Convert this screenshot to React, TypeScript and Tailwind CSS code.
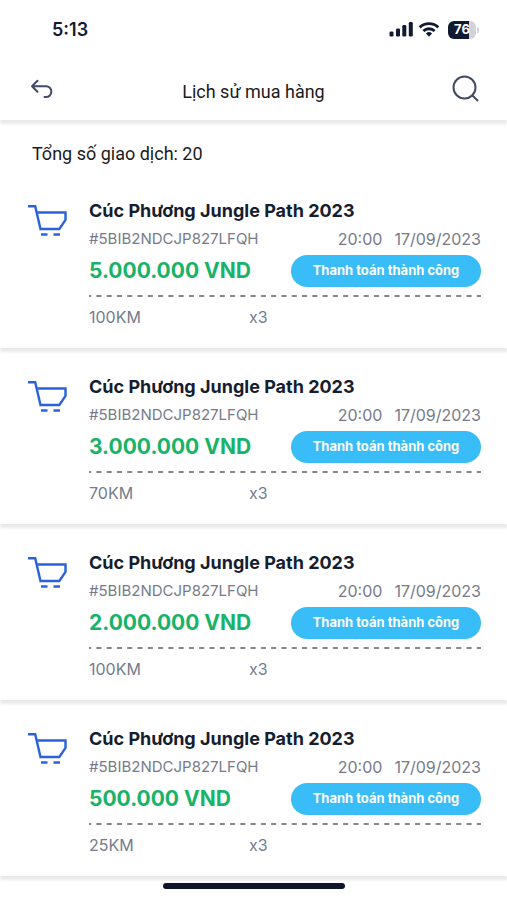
type Order = { id: number; amount: string; distance: string };

const orders: Order[] = [
  { id: 1, amount: "5.000.000 VND", distance: "100KM" },
  { id: 2, amount: "3.000.000 VND", distance: "70KM" },
  { id: 3, amount: "2.000.000 VND", distance: "100KM" },
  { id: 4, amount: "500.000 VND", distance: "25KM" },
];

function StatusBar() {
  return (
    <div className="flex h-14 items-center justify-between pl-13 pr-7 pt-1 text-[#111a30]">
      <time className="text-lg font-semibold">5:13</time>
      <div className="flex items-center gap-1">
        <svg width="25" height="19" viewBox="0 0 25 19" fill="currentColor" aria-hidden="true">
          <rect x="0.500" y="10.500" width="4" height="5" rx="1.300" />
          <rect x="7" y="7.500" width="4" height="8" rx="1.300" />
          <rect x="13.300" y="4" width="4" height="11.500" rx="1.300" />
          <rect x="19.800" y="1" width="4" height="14.500" rx="1.300" />
        </svg>
        <svg width="22" height="19" viewBox="0 0 23 19" fill="none" stroke="currentColor" strokeWidth="3" aria-hidden="true">
          <path d="M1.800 6.200a14 14 0 0 1 19.400 0" />
          <path d="M5.600 10a8.600 8.600 0 0 1 11.800 0" />
          <path d="M8.300 12.700a4.600 4.600 0 0 1 6.400 0L11.500 16z" fill="currentColor" stroke="none" />
        </svg>
        <div className="ml-1 flex items-center gap-px">
          <div className="flex h-[18px] w-7 items-center justify-center rounded-md bg-linear-to-r from-[#111a30] from-75% to-[#d0d3db] to-75% text-[13px] font-bold text-white">
            76
          </div>
          <div className="h-1.5 w-0.5 rounded-r-full bg-[#d0d3db]" />
        </div>
      </div>
    </div>
  );
}

function CartIcon() {
  return (
    <svg className="mt-1 shrink-0" width="40" height="34" viewBox="0 0 40 34" fill="none" stroke="#2a62dc" strokeWidth="2.400" aria-hidden="true">
      <path d="M0 3.200h7.200L12.500 26h18.800l6.200-9V9.500H8.700" />
      <path d="M13 31.500h6.500M25.500 31.500h6.500" />
    </svg>
  );
}

function OrderCard({ order }: { order: Order }) {
  return (
    <li className="flex h-44 gap-5 pl-7 pr-[26px] pt-[27px] shadow-[0_4px_3px_0_rgba(0,0,0,0.09)]">
      <CartIcon />
      <article className="min-w-0 flex-1 pl-px text-base text-[#757b8a]">
        <h2 className="text-lg leading-6 font-bold text-[#151d2f]">Cúc Phương Jungle Path 2023</h2>
        <div className="mt-1 flex items-center justify-between leading-6">
          <span className="text-[15px]">#5BIB2NDCJP827LFQH</span>
          <span className="flex gap-3">
            <time>20:00</time>
            <time>17/09/2023</time>
          </span>
        </div>
        <div className="mt-1 flex h-8 items-center justify-between">
          <strong className="text-[21px] leading-8 font-bold text-[#18b368]">{order.amount}</strong>
          <span className="flex h-8 w-[190px] items-center justify-center rounded-full bg-[#38bdf8] text-[13px] font-bold text-white">
            Thanh toán thành công
          </span>
        </div>
        <svg className="mt-2 block h-0.5 w-full" aria-hidden="true">
          <line x1="0" y1="1" x2="100%" y2="1" stroke="#85898f" strokeWidth="2" strokeDasharray="5.100 5.180" strokeDashoffset="2.900" />
        </svg>
        <div className="mt-2 flex leading-6">
          <span className="w-40">{order.distance}</span>
          <span>x3</span>
        </div>
      </article>
    </li>
  );
}

export default function App() {
  return (
    <div className="min-h-screen bg-white font-['Inter',sans-serif]">
      <header className="shadow-[0_4px_3px_0_rgba(0,0,0,0.09)]">
        <StatusBar />
        <div className="grid h-16 grid-cols-[1fr_auto_1fr] items-center px-7">
          <button type="button" aria-label="Quay lại" className="justify-self-start">
            <svg width="26" height="24" viewBox="0 0 26 24" fill="none" stroke="#434a65" strokeWidth="2" strokeLinecap="round" strokeLinejoin="round" aria-hidden="true">
              <path d="M9.500 4.700 4 10.200l5.500 5.500M4 10.200h14a5.400 5.400 0 0 1 0 10.800h-1.500" />
            </svg>
          </button>
          <h1 className="pt-2 font-['Roboto',sans-serif] text-lg text-[#1b1b1b]">Lịch sử mua hàng</h1>
          <button type="button" aria-label="Tìm kiếm" className="justify-self-end">
            <svg width="28" height="28" viewBox="0 0 28 28" fill="none" stroke="#434a65" strokeWidth="2" strokeLinecap="round" aria-hidden="true">
              <circle cx="13.500" cy="13.500" r="11" />
              <path d="m21.500 21.500 5 5" />
            </svg>
          </button>
        </div>
      </header>
      <main>
        <p className="px-8 pt-5 pb-1 font-['Roboto',sans-serif] text-lg text-[#1b1b1b]">Tổng số giao dịch: 20</p>
        <ul>
          {orders.map((order) => (
            <OrderCard key={order.id} order={order} />
          ))}
        </ul>
      </main>
      <div className="mx-auto mt-[7px] h-1.5 w-[182px] rounded-full bg-[#0d162b]" />
    </div>
  );
}
